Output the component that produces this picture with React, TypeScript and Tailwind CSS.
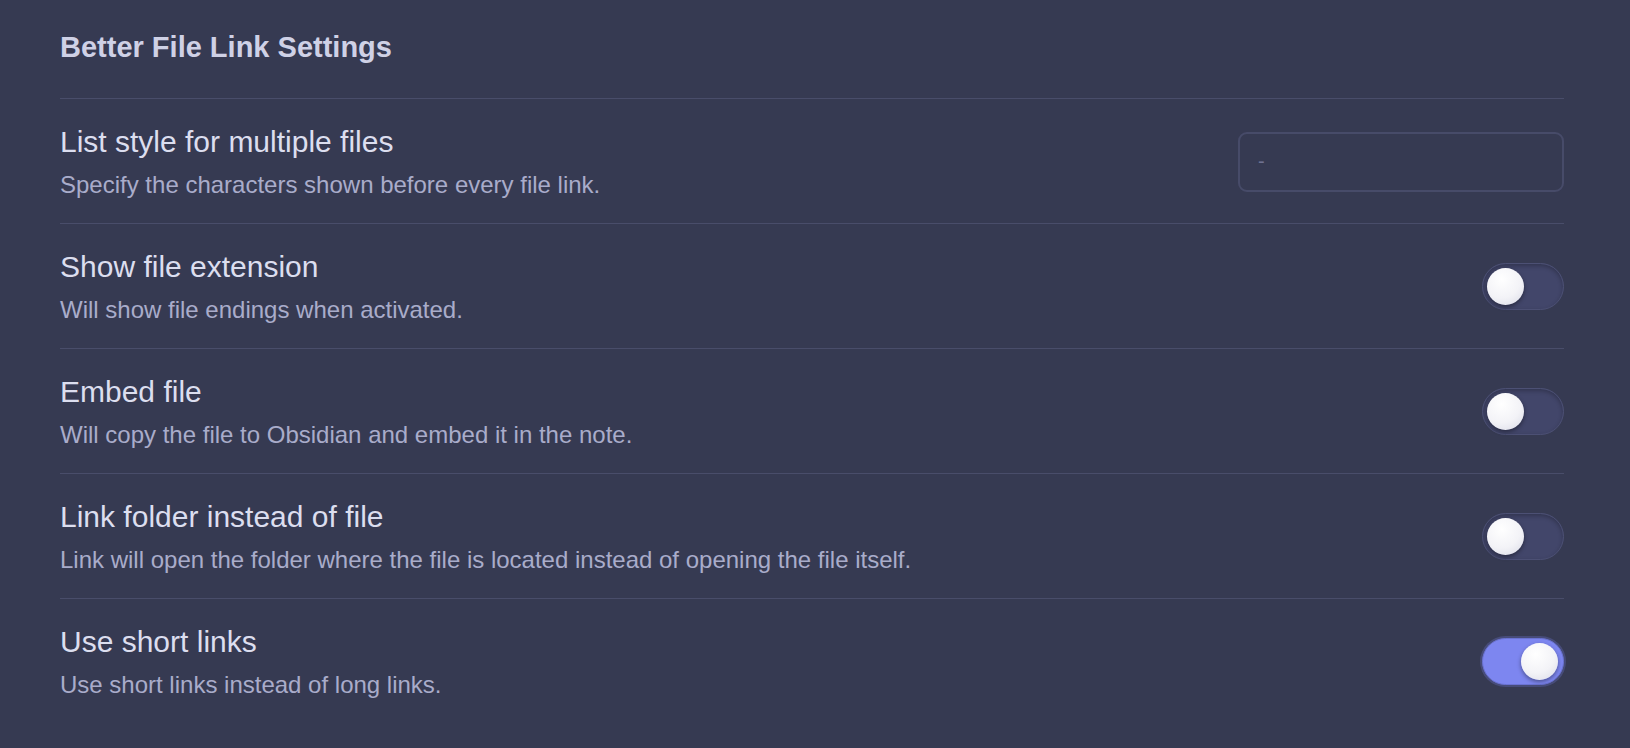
import { useState } from "react"

const rows = [
    {
        title: "Show file extension",
        desc: "Will show file endings when activated.",
        on: false,
    },
    {
        title: "Embed file",
        desc: "Will copy the file to Obsidian and embed it in the note.",
        on: false,
    },
    {
        title: "Link folder instead of file",
        desc: "Link will open the folder where the file is located instead of opening the file itself.",
        on: false,
    },
    {
        title: "Use short links",
        desc: "Use short links instead of long links.",
        on: true,
    },
]

const Toggle = ({ initial }: { initial: boolean }) => {
    const [on, setOn] = useState(initial)
    return (
        <button
            onClick={() => setOn(!on)}
            className={`relative w-[82px] h-[47px] rounded-full border shrink-0 transition-colors ${
                on
                    ? "bg-[#7d86f0] border-[#6b73d4] shadow-[0_0_0_2px_rgba(124,133,238,0.25)]"
                    : "bg-[#42466a] border-[#4c5074] shadow-[inset_0_2px_4px_rgba(0,0,0,0.25)]"
            }`}
        >
            <span
                className={`absolute top-[4px] w-[37px] h-[37px] rounded-full bg-[radial-gradient(circle_at_40%_30%,#ffffff_0%,#f3f3f7_55%,#d9dae6_100%)] shadow-[0_2px_4px_rgba(0,0,0,0.4)] transition-all ${
                    on ? "left-[38px]" : "left-[4px]"
                }`}
            />
        </button>
    )
}

const Row = ({ title, desc, children }: { title: string; desc: string; children: React.ReactNode }) => (
    <div className="border-t border-[#494d6a] flex items-center justify-between pt-[25px] pb-[24px]">
        <div>
            <div className="text-[30px] leading-[36px] text-[#dcdeef]">{title}</div>
            <div className="text-[24px] leading-[28px] mt-[11px] text-[#a9acca]">{desc}</div>
        </div>
        {children}
    </div>
)

export default function App() {
    return (
        <div
            className="min-h-screen bg-[#363a52] pl-[60px] pr-[66px] pt-[30px]"
            style={{ fontFamily: '"Liberation Sans", Arial, sans-serif' }}
        >
            <h2 className="text-[29px] leading-[34px] font-bold text-[#cfd1e6] mb-[34px]">Better File Link Settings</h2>

            {/* text input row */}
            <Row title="List style for multiple files" desc="Specify the characters shown before every file link.">
                <input
                    placeholder="-"
                    className="w-[326px] h-[60px] rounded-[9px] border-2 border-[#474b69] bg-transparent px-[18px] text-[20px] text-[#dcdeef] placeholder:text-[#6f7292] outline-none"
                />
            </Row>

            {rows.map((r) => (
                <Row key={r.title} title={r.title} desc={r.desc}>
                    <Toggle initial={r.on} />
                </Row>
            ))}
        </div>
    )
}
